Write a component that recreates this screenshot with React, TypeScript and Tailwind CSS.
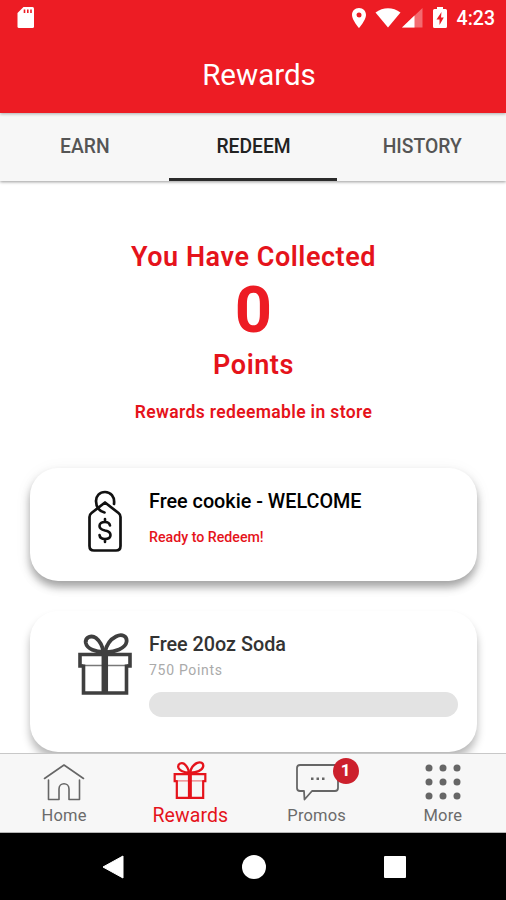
import type { ReactNode } from "react";

const tabs = ["EARN", "REDEEM", "HISTORY"];

function GiftIcon({ className }: { className?: string }) {
  return (
    <svg viewBox="0 0 54 62" fill="none" stroke="currentColor" className={className}>
      <path d="M25.500 19C18 19 9 16 7.800 10C7 4 13.500 1.800 18 5C22.500 8.500 24.500 13.500 25.500 19Z" strokeWidth="3.800" />
      <path d="M27 19C28.500 12 33 6 38 3.500C44 0.500 49.500 3 48.500 9C47.500 15 37 19.500 27 19Z" strokeWidth="3.800" />
      <path d="M5.500 33H2V21.500H52V33H48.500" strokeWidth="3.600" />
      <path d="M5.500 31.500V60H48.500V31.500" strokeWidth="3.600" />
      <path d="M26.800 18V61" strokeWidth="6.500" />
      <path d="M6 32.500H48" strokeWidth="1.600" opacity="0.700" />
    </svg>
  );
}

function TagIcon() {
  return (
    <svg viewBox="0 0 36 62" className="h-[62px] w-9" fill="none" stroke="#111" strokeWidth="2.700" strokeLinecap="round" strokeLinejoin="round">
      <path d="M27 14C28 6.500 23.500 2 18 2C12.500 2 9 6 9 11C9 17 12.500 21.500 17.500 22.500" />
      <path d="M18 12.500L31.500 23Q33.500 24.500 33.500 27V56Q33.500 60.500 29 60.500H7Q2.500 60.500 2.500 56V27Q2.500 24.500 4.500 23Z" />
      <path d="M23 35.500C22.500 33 21 32 18 32C14.500 32 12.500 33.500 12.500 36C12.500 39 15 39.800 18 40.500C21.500 41.200 23.500 42.500 23.500 45C23.500 47.500 21.500 49 18 49C14.500 49 12.800 47.500 12.500 45M18 29V32M18 49V52" strokeWidth="2.600" />
    </svg>
  );
}

function HomeIcon() {
  return (
    <svg viewBox="0 0 42 40" className="h-10 w-[42px]" fill="none" stroke="#666" strokeWidth="1.600" strokeLinecap="round" strokeLinejoin="round">
      <path d="M1.500 15.500L21 2L40.500 15.500" />
      <path d="M5.500 17V36.500H16V26C16 19 26 19 26 26V36.500H36.500V17" />
    </svg>
  );
}

function ChatIcon() {
  return (
    <svg viewBox="0 0 44 40" className="h-10 w-11" fill="none" stroke="#666" strokeWidth="1.800" strokeLinejoin="round">
      <path d="M5 2H40Q43 2 43 5V25Q43 28 40 28H17L9.500 36.500L9 28H5Q2 28 2 25V5Q2 2 5 2Z" />
      <path d="M16 15.800H18.500M21.500 15.800H24M27 15.800H29.500" strokeWidth="2.400" />
    </svg>
  );
}

function MoreIcon() {
  const dots = [4, 18, 32];
  return (
    <svg viewBox="0 0 36 36" className="h-9 w-9 -translate-y-px" fill="#666">
      {dots.map((y) => dots.map((x) => <circle key={`${x}-${y}`} cx={x} cy={y} r="3.500" />))}
    </svg>
  );
}

function StatusBar() {
  return (
    <div className="flex h-[35px] items-center pr-[11px] pl-[17px] text-white">
      <svg viewBox="0 0 17 21" className="h-[21px] w-[17px]">
        <path d="M6.500 0H15.500Q17 0 17 1.500V19.500Q17 21 15.500 21H2Q.5 21 .5 19.500V6Z" fill="white" />
        <path d="M7.500 2.500V6M10.800 2.500V6M14 2.500V6" stroke="#ed1c24" strokeWidth="1.600" />
      </svg>
      <div className="ml-auto flex items-center">
        <svg viewBox="0 0 16 20" className="h-5 w-4" fill="white">
          <path fillRule="evenodd" d="M8 0C3.800 0 1 3.200 1 7C1 12 8 20 8 20S15 12 15 7C15 3.200 12.200 0 8 0ZM8 4.500A2.500 2.500 0 1 1 8 9.500A2.500 2.500 0 0 1 8 4.500Z" />
        </svg>
        <svg viewBox="0 0 26 20" className="ml-[8px] h-5 w-[26px]" fill="white">
          <path d="M.5 4.500C8-1.200 18-1.200 25.500 4.500L13 19.500Z" />
        </svg>
        <svg viewBox="0 0 21 20" className="ml-px h-5 w-[21px]" fill="white">
          <path d="M20.500 0V19.500H0Z" opacity="0.350" />
          <path d="M12.500 7.600V19.500H0Z" />
        </svg>
        <svg viewBox="0 0 14 21" className="ml-[10px] h-[21px] w-[14px]">
          <path d="M4 0H10V2H12.500Q14 2 14 3.500V19.500Q14 21 12.500 21H1.500Q0 21 0 19.500V3.500Q0 2 1.500 2H4Z" fill="white" />
          <path d="M8.500 5L3.500 12.500H6.500V18L10.800 10.500H8Z" fill="#ed1c24" />
        </svg>
        <span className="ml-[10px] pt-[2px] text-[19.500px] leading-none font-medium">4:23</span>
      </div>
    </div>
  );
}

function Card({ icon, className, children }: { icon: ReactNode; className: string; children: ReactNode }) {
  return (
    <div className={`mx-[30px] flex w-[447px] shrink-0 rounded-[28px] bg-white ${className}`}>
      <div className="flex w-[119px] shrink-0 justify-center pl-[30px]">{icon}</div>
      <div className="flex-1">{children}</div>
    </div>
  );
}

function NavItem({ label, icon, active }: { label: string; icon: ReactNode; active?: boolean }) {
  return (
    <div className={`flex flex-1 flex-col items-center ${active ? "text-[#e5131b]" : "text-[#6b6b6b]"}`}>
      <div className="relative flex h-[50px] items-center justify-center pt-2">{icon}</div>
      <span className={active ? "text-[19.500px] leading-6 tracking-[0.100px]" : "text-[16.500px] leading-6 tracking-[0.150px]"}>
        {label}
      </span>
    </div>
  );
}

export default function App() {
  return (
    <div className="flex h-[900px] w-[506px] flex-col overflow-hidden bg-white font-['Roboto',sans-serif]">
      <header className="z-10 h-[113px] shrink-0 bg-[#ed1c24] shadow-[0_1px_3px_rgba(0,0,0,0.3)]">
        <StatusBar />
        <h1 className="pt-5 pl-[12px] text-center text-[29.500px] leading-10 text-white">Rewards</h1>
      </header>

      <nav className="flex h-[68px] shrink-0 bg-[#f7f7f7] shadow-[0_1px_3px_rgba(0,0,0,0.4)]">
        {tabs.map((tab) => (
          <div
            key={tab}
            className={`flex flex-1 justify-center border-b-[3px] pt-[22px] pl-px text-[19.300px] leading-6 font-medium ${
              tab === "REDEEM" ? "border-[#2b2b2b] text-[#222]" : "border-transparent text-[#555]"
            }`}
          >
            {tab}
          </div>
        ))}
      </nav>

      <main className="flex h-[572px] shrink-0 flex-col overflow-hidden">
        <div className="flex h-[287px] shrink-0 flex-col items-center pt-[60px] pl-px font-semibold text-[#e5131b]">
          <p className="text-[27px] leading-8 tracking-[0.550px]">You Have Collected</p>
          <p className="pt-[2px] text-[65px] leading-[70px] font-bold text-[#ed1c24]">0</p>
          <p className="pt-px text-[27px] leading-[38px] tracking-[0.550px]">Points</p>
          <p className="mt-[16px] text-[17.500px] leading-6 tracking-[0.350px]">Rewards redeemable in store</p>
        </div>

        <Card
          className="h-[113px] pt-[22px] shadow-[0_6px_9px_rgba(0,0,0,0.34),0_3px_18px_rgba(0,0,0,0.06)]"
          icon={<TagIcon />}
        >
          <p className="text-[19.800px] leading-6 font-medium text-black">Free cookie - WELCOME</p>
          <p className="mt-[13px] text-[14.200px] leading-5 font-medium text-[#e5131b]">Ready to Redeem!</p>
        </Card>

        <Card
          className="mt-[30px] h-[141px] pt-[22px] shadow-[0_7px_9px_rgba(0,0,0,0.28)]"
          icon={<GiftIcon className="h-[62px] w-[54px] text-[#3f3f3f]" />}
        >
          <p className="text-[19.800px] leading-6 font-medium text-[#333]">Free 20oz Soda</p>
          <p className="mt-[3px] text-[14px] leading-5 tracking-[0.700px] text-[#aaa]">750 Points</p>
          <div className="mt-3 h-[25px] w-[309px] rounded-full bg-[#e3e3e3]" />
        </Card>
      </main>

      <footer className="flex h-20 shrink-0 border-t border-b border-t-[#c8c8c8] border-b-[#b5b5b5] bg-[#f7f7f7] pl-px">
        <NavItem label="Home" icon={<HomeIcon />} />
        <NavItem label="Rewards" active icon={<GiftIcon className="h-[38px] w-[34px] -translate-y-[3px]" />} />
        <NavItem
          label="Promos"
          icon={
            <>
              <ChatIcon />
              <span className="absolute top-[4px] left-[38px] flex size-[26px] items-center justify-center rounded-full bg-[#cc202c] text-[17px] font-bold text-white">
                1
              </span>
            </>
          }
        />
        <NavItem label="More" icon={<MoreIcon />} />
      </footer>

      <div className="flex h-[67px] shrink-0 items-center justify-center bg-black pl-px">
        <svg viewBox="0 0 22 24" className="h-6 w-[22px]" fill="white" stroke="white" strokeLinejoin="round">
          <path d="M1 12L21 1V23Z" />
        </svg>
        <div className="ml-[118px] size-6 rounded-full bg-white" />
        <div className="ml-[118px] size-[22px] rounded-[1px] bg-white" />
      </div>
    </div>
  );
}
